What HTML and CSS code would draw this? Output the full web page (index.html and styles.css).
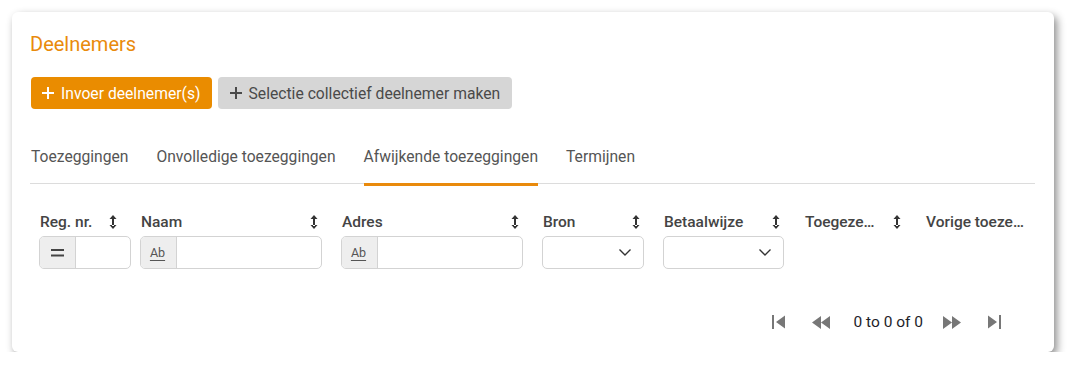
FILE: index.html
```html
<!DOCTYPE html>
<html lang="nl">
<head>
    <meta charset="UTF-8">
    <meta name="viewport" content="width=device-width, initial-scale=1.0">
    <title>Deelnemers</title>
    <link rel="stylesheet" href="styles.css">
</head>
<body>
    <div class="card">
        <h1 class="card-title">Deelnemers</h1>

        <div class="actions">
            <button class="btn btn-primary" type="button">
                <svg class="plus" width="12" height="12" viewBox="0 0 12 12"><path d="M6 0v12M0 6h12" stroke="currentColor" stroke-width="2"/></svg>
                Invoer deelnemer(s)
            </button>
            <button class="btn btn-secondary" type="button">
                <svg class="plus" width="12" height="12" viewBox="0 0 12 12"><path d="M6 0v12M0 6h12" stroke="currentColor" stroke-width="2"/></svg>
                Selectie collectief deelnemer maken
            </button>
        </div>

        <div class="tabs">
            <div class="tab">Toezeggingen</div>
            <div class="tab">Onvolledige toezeggingen</div>
            <div class="tab active">Afwijkende toezeggingen</div>
            <div class="tab">Termijnen</div>
        </div>

        <div class="grid-header">
            <div class="col col-reg">
                <div class="col-label"><span>Reg. nr.</span><svg class="sort" width="8" height="14" viewBox="0 0 8 14"><path d="M4 0L7.5 4H0.5Z M4 14L7.5 10H0.5Z M3 3h2v8H3Z" fill="#333"/></svg></div>
                <div class="filter filter-reg">
                    <span class="prefix"><svg width="13" height="8" viewBox="0 0 13 8"><path d="M0 1h13M0 6.5h13" stroke="#444" stroke-width="2"/></svg></span>
                    <span class="field"></span>
                </div>
            </div>
            <div class="col col-wide">
                <div class="col-label"><span>Naam</span><svg class="sort" width="8" height="14" viewBox="0 0 8 14"><path d="M4 0L7.5 4H0.5Z M4 14L7.5 10H0.5Z M3 3h2v8H3Z" fill="#333"/></svg></div>
                <div class="filter">
                    <span class="prefix"><span class="ab">Ab</span></span>
                    <span class="field"></span>
                </div>
            </div>
            <div class="col col-wide">
                <div class="col-label"><span>Adres</span><svg class="sort" width="8" height="14" viewBox="0 0 8 14"><path d="M4 0L7.5 4H0.5Z M4 14L7.5 10H0.5Z M3 3h2v8H3Z" fill="#333"/></svg></div>
                <div class="filter">
                    <span class="prefix"><span class="ab">Ab</span></span>
                    <span class="field"></span>
                </div>
            </div>
            <div class="col col-bron">
                <div class="col-label"><span>Bron</span><svg class="sort" width="8" height="14" viewBox="0 0 8 14"><path d="M4 0L7.5 4H0.5Z M4 14L7.5 10H0.5Z M3 3h2v8H3Z" fill="#333"/></svg></div>
                <div class="filter select">
                    <svg class="chevron" width="12" height="7" viewBox="0 0 12 7"><path d="M0.5 0.5L6 6L11.5 0.5" fill="none" stroke="#333" stroke-width="1.4"/></svg>
                </div>
            </div>
            <div class="col col-betaal">
                <div class="col-label"><span>Betaalwijze</span><svg class="sort" width="8" height="14" viewBox="0 0 8 14"><path d="M4 0L7.5 4H0.5Z M4 14L7.5 10H0.5Z M3 3h2v8H3Z" fill="#333"/></svg></div>
                <div class="filter select">
                    <svg class="chevron" width="12" height="7" viewBox="0 0 12 7"><path d="M0.5 0.5L6 6L11.5 0.5" fill="none" stroke="#333" stroke-width="1.4"/></svg>
                </div>
            </div>
            <div class="col col-toeg">
                <div class="col-label"><span>Toegeze…</span><svg class="sort" width="8" height="14" viewBox="0 0 8 14"><path d="M4 0L7.5 4H0.5Z M4 14L7.5 10H0.5Z M3 3h2v8H3Z" fill="#333"/></svg></div>
            </div>
            <div class="col col-vorige">
                <div class="col-label"><span>Vorige toeze…</span></div>
            </div>
        </div>

        <div class="pager">
            <svg class="pager-icon first" width="13" height="14" viewBox="0 0 13 14"><path d="M0 0h2v14H0Z M13 0.5V13.5L4 7Z" fill="#777"/></svg>
            <svg class="pager-icon prev" width="18" height="13" viewBox="0 0 18 13"><path d="M9 0V13L0 6.5Z M18 0V13L9 6.5Z" fill="#777"/></svg>
            <span class="pager-text">0 to 0 of 0</span>
            <svg class="pager-icon next" width="18" height="13" viewBox="0 0 18 13"><path d="M0 0V13L9 6.5Z M9 0V13L18 6.5Z" fill="#777"/></svg>
            <svg class="pager-icon last" width="13" height="14" viewBox="0 0 13 14"><path d="M0 0.5V13.5L9 7Z M11 0h2v14H11Z" fill="#777"/></svg>
        </div>
    </div>
</body>
</html>
```

FILE: styles.css
```css
body {
    font-family: Roboto, "Liberation Sans", Arial, sans-serif;
    background-color: #fff;
    margin: 0;
    color: #555;
}

.card {
    margin: 12px 0 0 12px;
    width: 1042px;
    box-sizing: border-box;
    padding: 20px 19px 20px 18px;
    background-color: #fff;
    border-radius: 6px;
    box-shadow: 3px 4px 8px rgba(0, 0, 0, 0.45);
}

.card-title {
    margin: 0;
    font-size: 20px;
    line-height: 24px;
    font-weight: 400;
    color: #e98a0c;
}

.actions {
    display: flex;
    gap: 6px;
    margin-top: 21px;
}

.btn {
    display: flex;
    align-items: center;
    gap: 7px;
    height: 32px;
    padding: 0 12px 0 12px;
    border: none;
    border-radius: 4px;
    font-family: inherit;
    font-size: 15.7px;
    cursor: pointer;
}

.btn-primary {
    background-color: #ea8c00;
    color: #fff;
    padding: 0 11px;
    margin-left: 1px;
}

.btn-secondary {
    background-color: #d6d6d6;
    color: #4a4a4a;
}

.tabs {
    display: flex;
    gap: 28px;
    margin-top: 38px;
    border-bottom: 1px solid #dcdcdc;
}

.tab {
    font-size: 15.65px;
    line-height: 20px;
    color: #555;
    padding-bottom: 16px;
    margin-bottom: -3px;
    border-bottom: 3px solid transparent;
}

.tab:first-child {
    padding-left: 1px;
}

.tab.active {
    border-bottom-color: #e98a0c;
}

.grid-header {
    display: flex;
    margin-top: 28px;
    overflow: hidden;
    height: 60px;
}

.col {
    flex-shrink: 0;
    box-sizing: border-box;
    padding: 0 10px 0 9px;
}

.col-reg { width: 101px; }
.col-wide { width: 201px; }
.col-bron { width: 121px; }
.col-betaal { width: 140px; }
.col-toeg { width: 121px; padding-left: 10px; }
.col-vorige { width: 130px; padding-left: 10px; }

.col-label {
    display: flex;
    justify-content: space-between;
    align-items: center;
    font-size: 15.5px;
    line-height: 20px;
    font-weight: 500;
    color: #444;
    white-space: nowrap;
}

.col-label span {
    padding-left: 1px;
}

.sort {
    margin-right: 4px;
}

.filter {
    display: flex;
    margin-top: 4px;
    height: 33px;
    box-sizing: border-box;
    border: 1px solid #d3d3d3;
    border-radius: 5px;
    overflow: hidden;
}

.filter-reg {
    width: 92px;
}

.prefix {
    display: flex;
    align-items: center;
    justify-content: center;
    width: 35px;
    background-color: #eee;
    border-right: 1px solid #d3d3d3;
}

.ab {
    font-size: 12.5px;
    color: #555;
    text-decoration: underline;
    text-underline-offset: 3px;
    margin-left: -2px;
}

.field {
    flex: 1;
}

.select {
    justify-content: flex-end;
    align-items: center;
    padding-right: 12px;
}

.pager {
    display: flex;
    justify-content: flex-end;
    align-items: center;
    margin-top: 40px;
    padding-right: 34px;
    height: 20px;
}

.pager-text {
    font-size: 15.5px;
    line-height: 20px;
    color: #1e1e2a;
    margin: 0 20px 0 23px;
}

.prev {
    margin-left: 27px;
}

.last {
    margin-left: 27px;
}
```
